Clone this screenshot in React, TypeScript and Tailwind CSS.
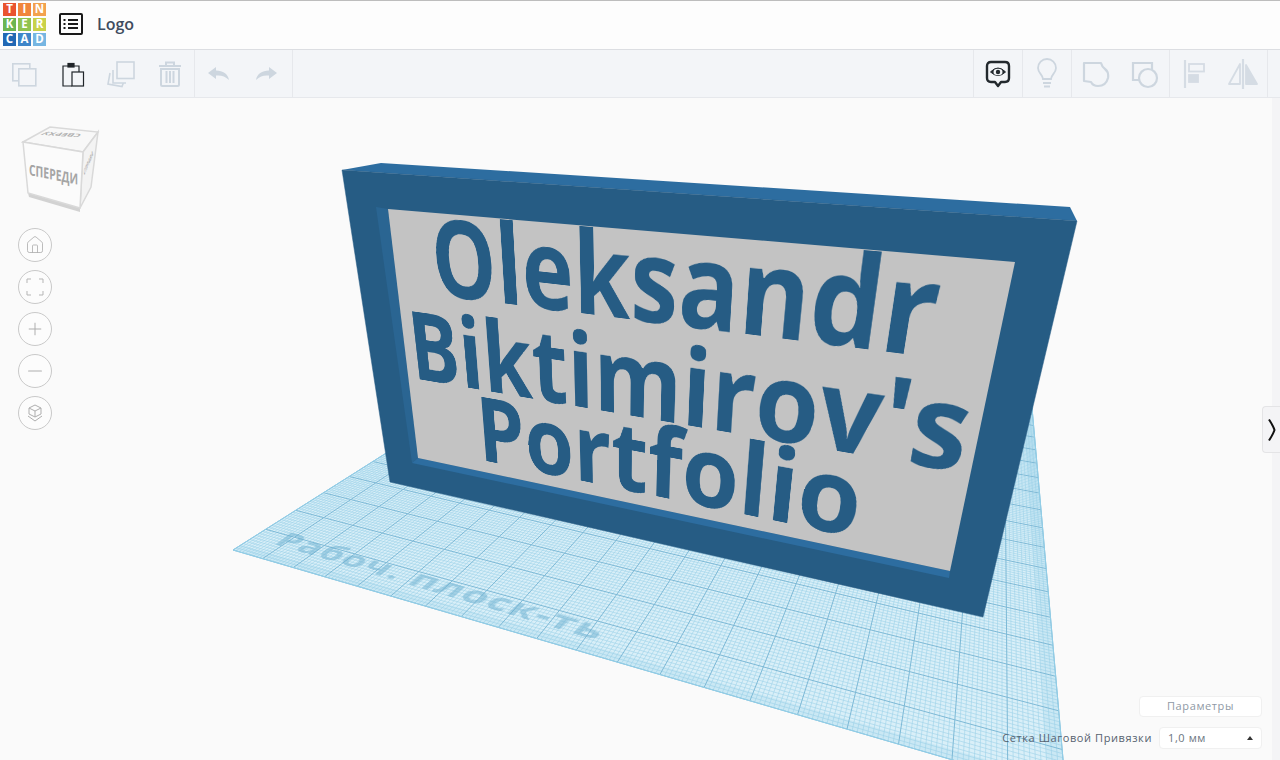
import { Home, Minus, Plus } from "lucide-react";

type Pt = [number, number];

// projective map from the unit square onto a quad (TL, TR, BR, BL)
const makeMap = (q: Pt[]) => {
  const [[x0, y0], [x1, y1], [x2, y2], [x3, y3]] = q;
  const sx = x0 - x1 + x2 - x3;
  const sy = y0 - y1 + y2 - y3;
  const dx1 = x1 - x2;
  const dx2 = x3 - x2;
  const dy1 = y1 - y2;
  const dy2 = y3 - y2;
  const den = dx1 * dy2 - dx2 * dy1;
  const g = (sx * dy2 - dx2 * sy) / den;
  const h = (dx1 * sy - sx * dy1) / den;
  return {
    a: x1 - x0 + g * x1,
    b: x3 - x0 + h * x3,
    c: x0,
    d: y1 - y0 + g * y1,
    e: y3 - y0 + h * y3,
    f: y0,
    g,
    h,
  };
};

const CANVAS_TOP = 98;

const quadTransform = (q: Pt[], w: number, h: number) => {
  const m = makeMap(q.map(([x, y]): Pt => [x, y - CANVAS_TOP]));
  return `matrix3d(${m.a / w},${m.d / w},0,${m.g / w},${m.b / h},${m.e / h},0,${m.h / h},0,0,1,0,${m.c},${m.f},0,1)`;
};

// work plane corners, far corners sit behind the model
const planeQuad: Pt[] = [
  [233, 550],
  [1066, 793],
  [1030, 385],
  [595, 321],
];
const plane = makeMap(planeQuad);
const onPlane = (u: number, v: number) => {
  const w = plane.g * u + plane.h * v + 1;
  return `${((plane.a * u + plane.b * v + plane.c) / w).toFixed(1)},${((plane.d * u + plane.e * v + plane.f) / w).toFixed(1)}`;
};
const seg = (u0: number, v0: number, u1: number, v1: number) =>
  `M${onPlane(u0, v0)}L${onPlane(u1, v1)}`;

const STEPS = 200;
let minorPath = "";
let majorPath = "";
for (let i = 0; i <= STEPS; i++) {
  const t = i / STEPS;
  const line = seg(t, 0, t, 1) + seg(0, t, 1, t);
  if (i % 10 === 0) majorPath += line;
  else minorPath += line;
}
const bandPath = `M${onPlane(0, 0)}L${onPlane(1, 0)}L${onPlane(1, 1)}L${onPlane(0.985, 1)}L${onPlane(0.985, 0.012)}L${onPlane(0, 0.012)}Z`;

const Scene = () => (
  <svg viewBox="0 98 1280 662" className="absolute inset-0 h-full w-full">
    {/* Workplane */}
    <polygon points={planeQuad.map((p) => p.join(",")).join(" ")} fill="#d9eff8" />
    <path d={minorPath} stroke="#a0d3ea" strokeWidth="0.65" fill="none" />
    <path d={bandPath} fill="#8fcbe6" opacity="0.2" />
    <path d={majorPath} stroke="#7db9d6" strokeWidth="1" fill="none" />
    <polygon points={planeQuad.map((p) => p.join(",")).join(" ")} fill="none" stroke="#93cfe8" strokeWidth="1" />

    {/* Nameplate */}
    <polygon points="342,170 381,163 1070,207 1077,221" fill="#2d6da0" />
    <polygon points="342,170 1077,221 983,617 390,482" fill="#265c84" stroke="#2b5f86" strokeWidth="0.5" />
    <polygon points="376,207 388,209 418,458 412,463" fill="#2a6592" />
    <polygon points="418,458 950,571 949,578 412,463" fill="#2d6da0" />
    <polygon points="388,209 1015,262 950,571 418,458" fill="#c3c3c3" />
  </svg>
);

const Cube = () => (
  <svg viewBox="0 0 110 110" className="absolute left-[10px] top-[22px] h-[110px] w-[110px]">
    <polygon points="18,73 70,88 70,92 19,77" fill="#d2d2d2" />
    <polygon points="13,22 40,7 88,12 73,32" fill="#f8f8f8" stroke="#d9d9d9" strokeWidth="1.5" />
    <polygon points="73,32 88,12 81,67 70,88" fill="#f3f3f3" stroke="#d9d9d9" strokeWidth="1.5" />
    <polygon points="13,22 73,32 70,88 18,73" fill="#fbfbfb" stroke="#d9d9d9" strokeWidth="1.5" />
    <text
      transform="matrix(1 0.2 0 1 19 55)"
      fontFamily="Open Sans, sans-serif"
      fontWeight="700"
      fontSize="15"
      textLength="49"
      lengthAdjust="spacingAndGlyphs"
      fill="#a5a5a5"
    >
      СПЕРЕДИ
    </text>
    <text
      transform="matrix(-0.95 -0.06 0.5 -0.5 72 14)"
      fontFamily="Open Sans, sans-serif"
      fontWeight="700"
      fontSize="9"
      textLength="40"
      lengthAdjust="spacingAndGlyphs"
      fill="#b0b0b0"
    >
      СВЕРХУ
    </text>
    <text
      transform="matrix(0.35 -0.8 0.05 1 74 56)"
      fontFamily="Open Sans, sans-serif"
      fontWeight="700"
      fontSize="8"
      textLength="26"
      lengthAdjust="spacingAndGlyphs"
      fill="#b0b0b0"
    >
      СПРАВА
    </text>
  </svg>
);

const NavButton = ({ children }: { children: React.ReactNode }) => (
  <button className="flex h-[34px] w-[34px] items-center justify-center rounded-full border border-[#c9c9c9] bg-[#fcfcfc] text-[#aeaeae]">
    {children}
  </button>
);

const ToolButton = ({ children, divider }: { children: React.ReactNode; divider?: boolean }) => (
  <div
    className={`flex h-full w-[49px] items-center justify-center ${divider ? "border-l border-[#e6e8ec]" : ""}`}
  >
    {children}
  </div>
);

const tile =
  "flex h-[13px] w-[13px] items-center justify-center text-[11.5px] font-bold leading-none text-white";

export default function App() {
  return (
    <div className="flex h-[760px] w-[1280px] flex-col overflow-hidden bg-[#fafafa] font-['Open_Sans',sans-serif]">
      {/* Top bar */}
      <header className="flex h-[50px] shrink-0 items-center border-b border-t border-b-[#dcdee2] border-t-[#bdbdbd] bg-[#fdfdfd] pb-[2px] shadow-[0_1px_2px_rgba(0,0,0,0.05)]">
        <div className="ml-[3px] grid grid-cols-3 gap-[2px]">
          <span className={`${tile} bg-[#e9542f]`}>T</span>
          <span className={`${tile} bg-[#f0853d]`}>I</span>
          <span className={`${tile} bg-[#f3a24f]`}>N</span>
          <span className={`${tile} bg-[#6cb551]`}>K</span>
          <span className={`${tile} bg-[#90c34f]`}>E</span>
          <span className={`${tile} bg-[#c9d24a]`}>R</span>
          <span className={`${tile} bg-[#2268b4]`}>C</span>
          <span className={`${tile} bg-[#3f86c9]`}>A</span>
          <span className={`${tile} bg-[#76b6e2]`}>D</span>
        </div>
        <svg viewBox="0 0 24 22" className="ml-[13px] h-[22px] w-[24px]" fill="none" stroke="#1a1a1a">
          <rect x="1" y="1" width="22" height="20" rx="1" strokeWidth="2" />
          <path d="M9 7h10M9 11h10M9 15h10" strokeWidth="2" />
          <path d="M4.5 7h2M4.5 11h2M4.5 15h2" strokeWidth="2" />
        </svg>
        <span className="ml-[14px] text-[16px] font-semibold text-[#3f4c5f]">Logo</span>
      </header>

      {/* Toolbar */}
      <div className="relative z-10 flex h-[48px] shrink-0 items-center border-b border-[#e6e8ec] bg-[#f3f5f8] pr-[12px]">
        <div className="flex h-full w-[194px] [&>div]:w-[48.5px]">
          <ToolButton>
            <svg viewBox="0 0 28 28" className="h-7 w-7" fill="#f3f5f8" stroke="#cdd6df" strokeWidth="1.6">
              <rect x="2.8" y="3.8" width="17" height="17" />
              <rect x="8.8" y="8.8" width="17" height="17" />
            </svg>
          </ToolButton>
          <ToolButton>
            <svg viewBox="0 0 28 28" className="h-7 w-7" fill="none" stroke="#1f2429" strokeWidth="1.2">
              <path d="M9 6H4v20h9" />
              <path d="M15 6h5v6" />
              <rect x="9" y="3.500" width="6" height="3.500" fill="#1f2429" />
              <rect x="13" y="12" width="11.500" height="14" fill="#f3f5f8" />
            </svg>
          </ToolButton>
          <ToolButton>
            <svg viewBox="0 0 28 28" className="h-7 w-7" fill="#f3f5f8" stroke="#cdd6df" strokeWidth="1.6">
              <path d="M3 13l-2 11 14 2.500 1.500-4" />
              <path d="M6 10v13h13" />
              <rect x="10" y="2" width="17" height="16.500" />
            </svg>
          </ToolButton>
          <ToolButton>
            <svg viewBox="0 0 28 28" className="h-7 w-7" fill="none" stroke="#cdd6df" strokeWidth="2">
              <path d="M3 6h22M10 5V2.500h8V5" />
              <path d="M5 9v15.500q0 1.500 1.500 1.500h15q1.500 0 1.500-1.500V9z" />
              <path d="M10.500 11v12M14 11v12M17.500 11v12" />
            </svg>
          </ToolButton>
        </div>
        <ToolButton divider>
          <svg viewBox="0 0 24 16" className="h-4 w-6" fill="#cdd6df">
            <path d="M9 1L1 7l8 6V9.500c5-.500 9 .500 13 4.500-1-6-6-9.500-13-9.500z" />
          </svg>
        </ToolButton>
        <ToolButton>
          <svg viewBox="0 0 24 16" className="mr-[3px] h-4 w-6" fill="#cdd6df">
            <path d="M15 1l8 6-8 6V9.500c-5-.500-9 .500-13 4.500 1-6 6-9.500 13-9.500z" />
          </svg>
        </ToolButton>
        <div className="h-full border-l border-[#e6e8ec]" />

        <div className="ml-auto flex h-full">
          <ToolButton divider>
            <svg viewBox="0 0 28 30" className="h-[30px] w-7" fill="none" stroke="#23292e">
              <path
                d="M7 3h14q4 0 4 4v12q0 4-4 4h-4l-3 4-3-4H7q-4 0-4-4V7q0-4 4-4z"
                strokeWidth="2.400"
                strokeLinejoin="round"
              />
              <path d="M6.500 13q7.500-8 15 0-7.500 7-15 0z" fill="#23292e" />
              <ellipse cx="14" cy="13" rx="4.500" ry="3.200" fill="#f3f5f8" stroke="none" />
              <circle cx="14" cy="13" r="2.200" fill="#23292e" stroke="none" />
            </svg>
          </ToolButton>
          <ToolButton divider>
            <svg viewBox="0 0 24 32" className="h-8 w-6" fill="none" stroke="#cdd6df" strokeWidth="1.800">
              <path d="M8 21c0-4-5-6-5-11a9 9 0 0 1 18 0c0 5-5 7-5 11z" />
              <path d="M8 25h8M9 28.500h6" />
            </svg>
          </ToolButton>
          <ToolButton divider>
            <svg viewBox="0 0 28 28" className="mt-[2px] h-7 w-7" fill="none" stroke="#cdd6df" strokeWidth="2.200">
              <path d="M2 2h17q1 4 4 6 4 3 3 9-2 8-10 8-5 0-7-4l-7-1z" strokeLinejoin="round" />
            </svg>
          </ToolButton>
          <ToolButton>
            <svg viewBox="0 0 28 28" className="mt-[2px] h-7 w-7" fill="none" stroke="#cdd6df" strokeWidth="2.200">
              <path d="M9 19H2V2h19v7" />
              <circle cx="17" cy="17" r="9" />
            </svg>
          </ToolButton>
          <ToolButton divider>
            <svg viewBox="0 0 24 28" className="h-7 w-6" fill="none" stroke="#d5dce4">
              <path d="M3 0v28" strokeWidth="2.200" />
              <rect x="7" y="4" width="15" height="7.500" strokeWidth="1.800" />
              <rect x="7" y="15" width="9" height="7" fill="#d5dce4" strokeWidth="1.800" />
            </svg>
          </ToolButton>
          <ToolButton>
            <svg viewBox="0 0 32 32" className="h-8 w-8" fill="none" stroke="#d5dce4">
              <path d="M16 1v30" strokeWidth="2.200" />
              <path d="M13 6v20H2z" strokeWidth="1.800" strokeLinejoin="round" />
              <path d="M19 7v19h11z" fill="#d5dce4" strokeWidth="1.800" strokeLinejoin="round" />
            </svg>
          </ToolButton>
          <div className="h-full border-l border-[#e6e8ec]" />
        </div>
      </div>

      {/* Canvas */}
      <main className="relative min-h-0 flex-1 overflow-hidden">
        <Scene />

        {/* Text on the workplane */}
        <div
          className="absolute left-0 top-0 flex h-[40px] w-[320px] origin-top-left items-center whitespace-nowrap text-[38px] font-bold leading-none tracking-[1.200px] text-[#6aaecf] opacity-50"
          style={{
            transform: quadTransform(
              [
                [293, 528],
                [606, 618],
                [583, 640],
                [270, 546],
              ],
              320,
              40,
            ),
          }}
        >
          Рабоч. плоск-ть
        </div>

        {/* Text on the nameplate */}
        <div
          className="absolute left-0 top-0 flex h-[420px] w-[1000px] origin-top-left flex-col items-center text-[162px] font-bold leading-[131px] text-[#265c84]"
          style={{
            transform: quadTransform(
              [
                [388, 209],
                [1015, 262],
                [950, 571],
                [418, 458],
              ],
              1000,
              420,
            ),
          }}
        >
          <span className="-mt-[4px]">Oleksandr</span>
          <span className="mt-[16px]">Biktimirov's</span>
          <span className="-mt-[4px]">Portfolio</span>
        </div>

        <Cube />

        {/* View controls */}
        <div className="absolute left-[18px] top-[130px] flex flex-col gap-2">
          <NavButton>
            <Home size={20} strokeWidth={1} />
          </NavButton>
          <NavButton>
            <svg viewBox="0 0 18 18" className="h-[18px] w-[18px]" fill="none" stroke="#b5b5b5">
              <path d="M1 5V1h4M13 1h4v4M17 13v4h-4M5 17H1v-4" />
            </svg>
          </NavButton>
          <NavButton>
            <Plus size={20} strokeWidth={1.2} />
          </NavButton>
          <NavButton>
            <Minus size={22} strokeWidth={1.2} />
          </NavButton>
          <NavButton>
            <svg viewBox="0 0 20 20" className="h-5 w-5" fill="none" stroke="#aeaeae">
              <path d="M10 2l6 3v6l-6 3-6-3V5zM4 5l6 3 6-3M10 8v6" />
              <path d="M3 13l7 5 7-5" />
            </svg>
          </NavButton>
        </div>

        {/* Right rail */}
        <div className="absolute bottom-0 right-0 top-0 w-[8px] bg-[#f4f4f6]" />
        <button className="absolute right-0 top-[308px] flex h-[47px] w-[18px] items-center justify-center rounded-l-sm border border-r-0 border-[#e4e4e6] bg-[#f4f4f6]">
          <svg viewBox="0 0 10 24" className="h-[24px] w-[10px]" fill="none" stroke="#111" strokeWidth="2">
            <path d="M2 1.500c2.500 4 4.500 7 5.500 10.500-1 3.500-3 6.500-5.500 10.500" />
          </svg>
        </button>

        {/* Bottom right settings */}
        <div className="absolute bottom-[11px] right-[18px] flex flex-col items-end gap-[10px] text-[11px] tracking-[0.6px]">
          <div className="flex h-[21px] w-[123px] items-center justify-center rounded-sm border border-[#f0f0f0] bg-white text-[#8f99a5]">
            Параметры
          </div>
          <div className="flex items-center gap-[7px]">
            <span className="text-[#56626f]">Сетка Шаговой Привязки</span>
            <div className="flex h-[22px] w-[103px] items-center justify-between rounded-sm border border-[#f0f0f0] bg-white pl-[8px] pr-[8px] text-[#6b7580]">
              <span>1,0 мм</span>
              <span className="h-0 w-0 border-x-[3.500px] border-b-[4px] border-x-transparent border-b-[#333]" />
            </div>
          </div>
        </div>
      </main>
    </div>
  );
}
